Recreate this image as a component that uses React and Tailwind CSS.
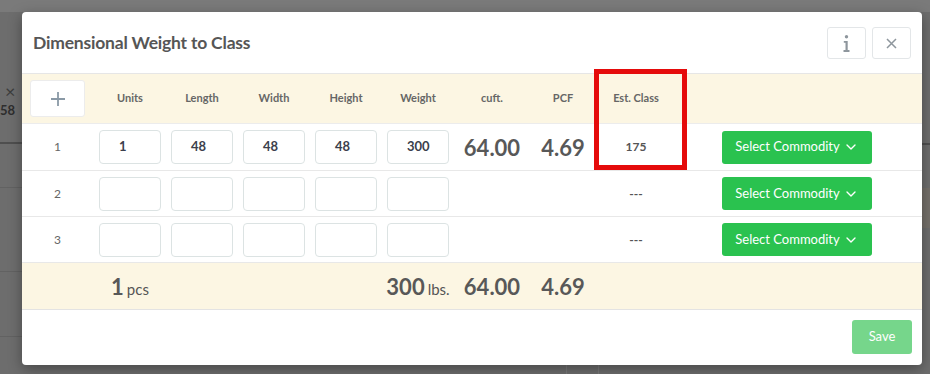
import React from 'react';
import { ChevronDown } from 'lucide-react';

const rows = [
  { id: 1, values: ['1', '48', '48', '48', '300'], cuft: '64.00', pcf: '4.69', cls: '175' },
  { id: 2, values: ['', '', '', '', ''], cuft: '', pcf: '', cls: '---' },
  { id: 3, values: ['', '', '', '', ''], cuft: '', pcf: '', cls: '---' },
];

const fields = ['Units', 'Length', 'Width', 'Height', 'Weight'];

const InfoIcon = () => (
  <svg width="7" height="17" viewBox="0 0 7 17" fill="#8e969d">
    <circle cx="3.5" cy="1.8" r="1.7" />
    <path d="M0.8 6h3.9v9h1.8V17H0.5v-2h2V7.8H0.8z" />
  </svg>
);

const CloseIcon = () => (
  <svg width="11" height="11" viewBox="0 0 11 11" stroke="#8e969d" strokeWidth="1.5" fill="none">
    <path d="M1 1l9 9M10 1l-9 9" />
  </svg>
);

const PlusIcon = () => (
  <svg width="14" height="14" viewBox="0 0 14 14" stroke="#8a99a6" strokeWidth="1.8" fill="none">
    <path d="M7 0v14M0 7h14" />
  </svg>
);

const CommodityButton = () => (
  <button className="w-[150px] h-[33px] rounded-[3px] bg-[#2ac24f] text-white text-[13px] flex items-center justify-center gap-[3px]">
    Select Commodity
    <ChevronDown className="w-[16px] h-[16px]" strokeWidth={2} />
  </button>
);

export default function App() {
  return (
    <div
      className="relative h-[374px] w-[930px] overflow-hidden bg-[#6d6d6d] pt-[12px] pl-[22px]"
      style={{ fontFamily: 'Lato, "Open Sans", sans-serif' }}
    >
      {/* dimmed page behind */}
      <div className="absolute left-0 top-0 w-[930px] h-[12px] bg-[#7a7a7a]" />
      <div className="absolute left-[5px] top-[78px] text-[#3d3d3d] text-[18px]">×</div>
      <div className="absolute left-0 top-[101px] text-[#2e2e2e] text-[13px] font-bold">58</div>
      <div className="absolute left-0 top-[142px] w-[22px] h-[2px] bg-[#4f4f4f]" />
      <div className="absolute left-0 top-[187px] w-[22px] h-[1px] bg-[#626262]" />
      <div className="absolute left-0 top-[271px] w-[22px] h-[1px] bg-[#626262]" />
      <div className="absolute left-0 top-[336px] w-[22px] h-[1px] bg-[#626262]" />
      <div className="absolute left-[922px] top-[143px] w-[8px] h-[2px] bg-[#4f4f4f]" />
      <div className="absolute left-[922px] top-[188px] w-[8px] h-[40px] bg-[#75706a]" />
      <div className="absolute left-[566px] top-[365px] w-[1px] h-[9px] bg-[#7a7a7a]" />
      <div className="absolute left-[598px] top-[365px] w-[1px] h-[9px] bg-[#7a7a7a]" />

      <div className="relative w-[900px] h-[353px] bg-white rounded-[4px] shadow-[0_4px_14px_rgba(0,0,0,0.35)] overflow-hidden">
        {/* header */}
        <div className="h-[62px] flex items-center justify-between pl-[11px] pr-[11px] border-b border-[#e6e6e6]">
          <h2 className="text-[17.5px] font-bold text-[#565656] tracking-[-0.2px] pt-[1px]">Dimensional Weight to Class</h2>
          <div className="flex gap-[6px] pt-[1px]">
            <button className="w-[39px] h-[32px] border border-[#e3e6e8] rounded-[3px] flex items-center justify-center">
              <InfoIcon />
            </button>
            <button className="w-[39px] h-[32px] border border-[#e3e6e8] rounded-[3px] flex items-center justify-center">
              <CloseIcon />
            </button>
          </div>
        </div>

        {/* column header */}
        <div className="h-[50px] bg-[#fcf6e3] flex items-center pl-[8px] border-b border-[#ececec]">
          <button className="w-[55px] h-[37px] bg-white border border-[#ececec] rounded-[3px] flex items-center justify-center">
            <PlusIcon />
          </button>
          <div className="w-[9px]" />
          {fields.map((f) => (
            <div key={f} className="w-[72px] text-center text-[11px] font-bold text-[#666]">{f}</div>
          ))}
          <div className="w-[76px] text-center text-[11px] font-bold text-[#666]">cuft.</div>
          <div className="w-[66px] text-center text-[11px] font-bold text-[#666]">PCF</div>
          <div className="w-[80px] text-center text-[11px] font-bold text-[#666]">Est. Class</div>
        </div>

        {/* rows */}
        {rows.map((r) => (
          <div
            key={r.id}
            className={`${r.id === 1 ? 'h-[47px]' : 'h-[46px]'} flex items-center pl-[8px] border-b border-[#e8e8e8]`}
          >
            <div className="w-[55px] text-center text-[12px] text-[#666]">{r.id}</div>
            <div className="w-[9px]" />
            {r.values.map((v, i) => (
              <div key={i} className="w-[72px] flex justify-center">
                <div className="w-[62px] h-[34px] border border-[#dce3e3] rounded-[4px] flex items-center pl-[19px] text-[13px] font-bold text-[#3b3f4c]">
                  {v}
                </div>
              </div>
            ))}
            <div className="w-[76px] text-center text-[22px] font-bold text-[#585858]">{r.cuft}</div>
            <div className="w-[66px] text-center text-[22px] font-bold text-[#585858]">{r.pcf}</div>
            <div className="w-[80px] text-center text-[12px] font-bold text-[#555]">{r.cls}</div>
            <div className="ml-[46px]">
              <CommodityButton />
            </div>
          </div>
        ))}

        {/* totals */}
        <div className="h-[47px] bg-[#fcf6e3] flex items-center pl-[8px] border-b border-[#e3e3e3]">
          <div className="w-[64px]" />
          <div className="w-[72px] text-center text-[#585858]">
            <span className="text-[22px] font-bold">1</span>
            <span className="text-[15px] ml-[3px] text-[#555]">pcs</span>
          </div>
          <div className="w-[216px]" />
          <div className="w-[72px] text-center text-[#585858] whitespace-nowrap">
            <span className="text-[22px] font-bold">300</span>
            <span className="text-[15px] ml-[3px] text-[#555]">lbs.</span>
          </div>
          <div className="w-[76px] text-center text-[22px] font-bold text-[#585858]">64.00</div>
          <div className="w-[66px] text-center text-[22px] font-bold text-[#585858]">4.69</div>
        </div>

        {/* footer */}
        <div className="flex justify-end pt-[10px] pr-[10px]">
          <button className="w-[60px] h-[34px] rounded-[3px] bg-[#76d68b] text-white text-[13px]">Save</button>
        </div>

        {/* annotation */}
        <div className="absolute left-[572px] top-[57px] w-[93px] h-[101px] border-[5px] border-[#e50b0b]" />
      </div>
    </div>
  );
}
